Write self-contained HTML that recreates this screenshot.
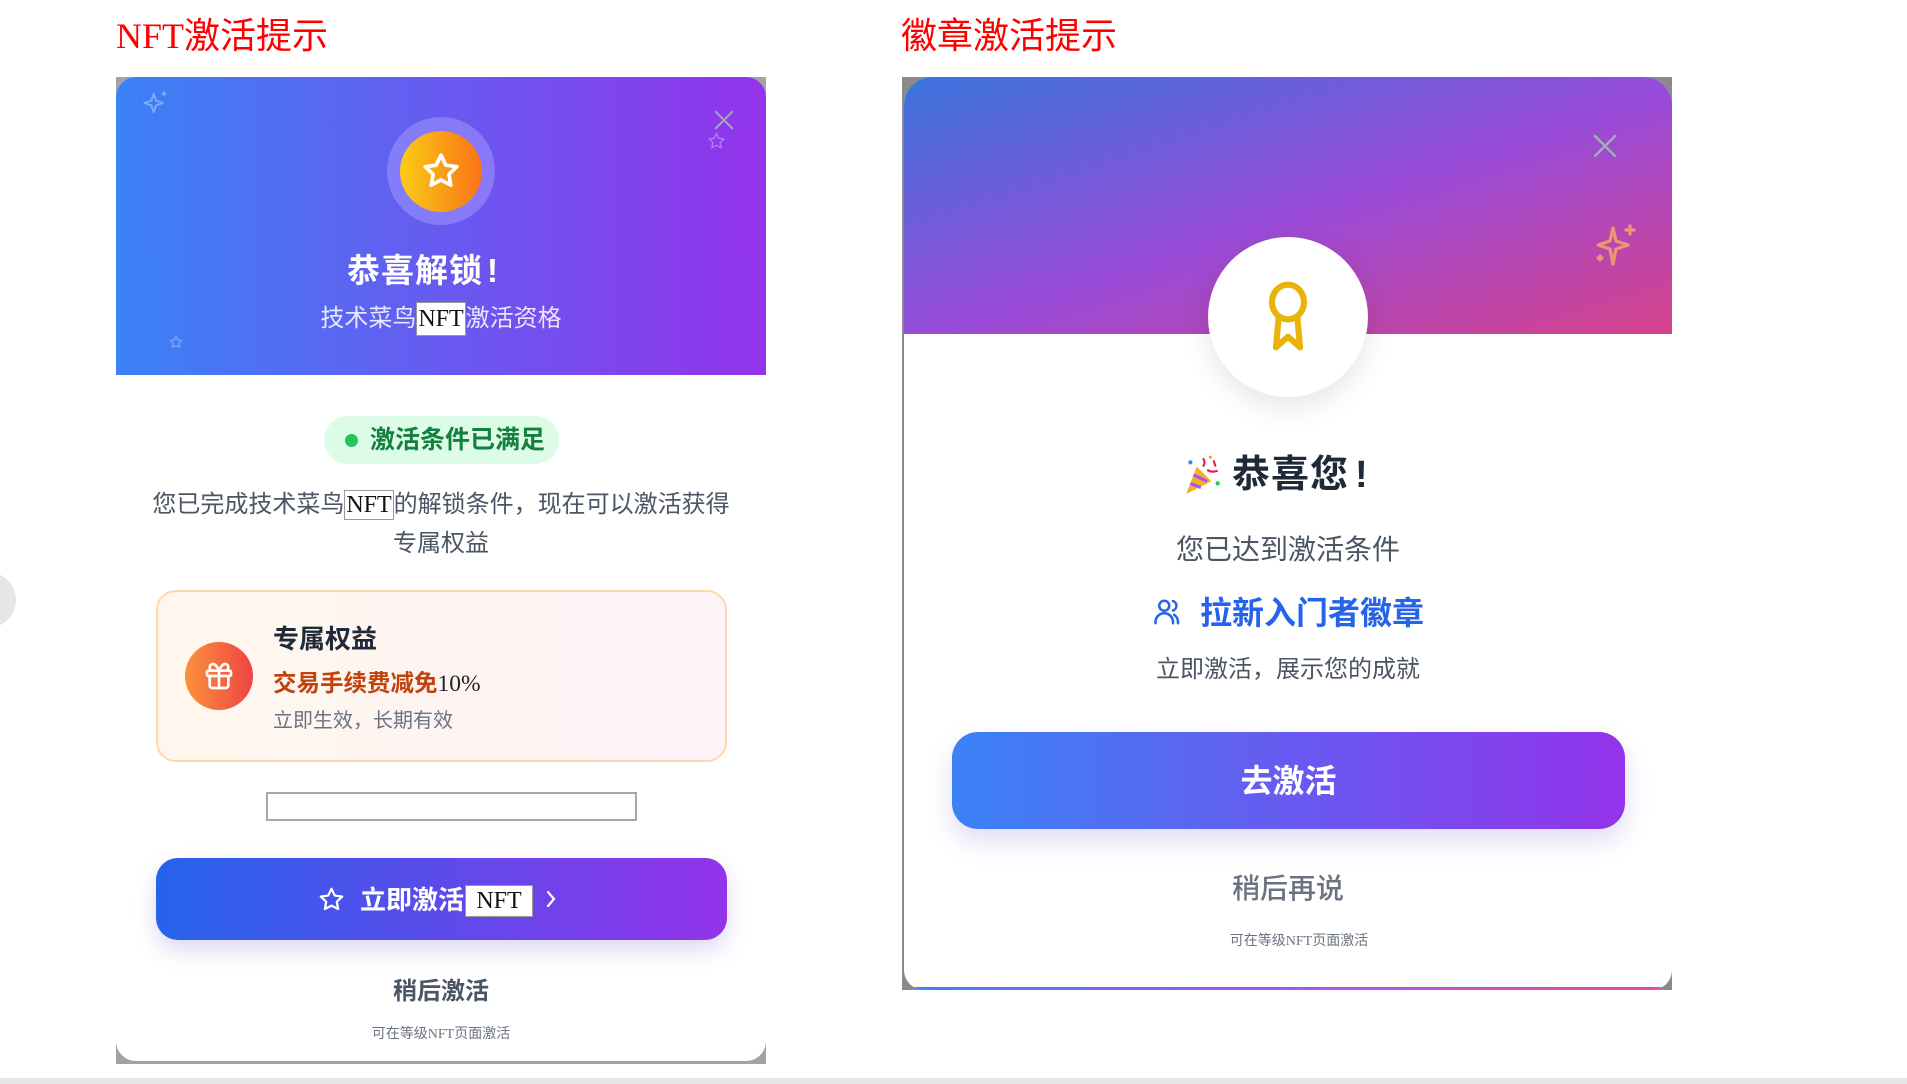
<!DOCTYPE html>
<html><head><meta charset="utf-8"><style>
*{margin:0;padding:0;box-sizing:border-box}
body{width:1907px;height:1084px;background:#fff;position:relative;overflow:hidden;font-family:"Liberation Sans","Noto Sans CJK SC",sans-serif}
.a{position:absolute}
.t{position:absolute;white-space:nowrap;text-align:center}
.nft{font-family:"Liberation Serif","Noto Serif CJK SC",serif;background:#fff;border:1px solid #999;color:#111;font-weight:normal;display:inline-block}
</style></head><body>

<div class="t" style="left:116px;top:14px;font-size:36px;line-height:44px;color:#f00;font-family:'Liberation Serif','Noto Sans CJK SC',sans-serif;text-align:left">NFT激活提示</div>
<div class="t" style="left:901px;top:14px;font-size:36px;line-height:44px;color:#f00;font-family:'Liberation Serif','Noto Sans CJK SC',sans-serif;text-align:left">徽章激活提示</div>

<div class="a" style="left:-40px;top:572px;width:56px;height:56px;border-radius:50%;background:#e6e6e6"></div>
<div class="a" style="left:0;top:1078px;width:1907px;height:6px;background:#e5e5e5"></div>

<!-- LEFT CARD -->
<div class="a" style="left:116px;top:77px;width:650px;height:987px;background:#a3a3a3"></div>
<div class="a" style="left:116px;top:77px;width:650px;height:984px;background:#fff;border-radius:20px;overflow:hidden">
  <div class="a" style="left:0;top:0;width:650px;height:298px;background:linear-gradient(90deg,#3b82f6,#9333ea)"></div>
</div>
<svg class="a" style="left:141px;top:89px" width="30" height="28" viewBox="0 0 24 24" fill="none" stroke="rgba(255,255,255,.35)" stroke-width="1.6" stroke-linejoin="round"><path d="M10 4 L12 10 L18 12 L12 14 L10 20 L8 14 L2 12 L8 10 Z"/><path d="M19 2v4M17 4h4"/></svg>
<svg class="a" style="left:712px;top:110px" width="24" height="22" viewBox="0 0 24 24" stroke="#a5a8c0" stroke-width="2.2" stroke-linecap="round"><path d="M3 2 L21 20 M21 2 L3 20"/></svg>
<svg class="a" style="left:707px;top:132px" width="19" height="18" viewBox="0 0 24 24" fill="none" stroke="rgba(255,255,255,.35)" stroke-width="1.8" stroke-linejoin="round"><path d="M12 2l3 6.5 7 .8-5.2 4.8 1.4 7L12 17.6 5.8 21.1l1.4-7L2 9.3l7-.8z"/></svg>
<svg class="a" style="left:169px;top:335px" width="14" height="14" viewBox="0 0 24 24" fill="none" stroke="rgba(255,255,255,.35)" stroke-width="2" stroke-linejoin="round"><path d="M12 2l3 6.5 7 .8-5.2 4.8 1.4 7L12 17.6 5.8 21.1l1.4-7L2 9.3l7-.8z"/></svg>
<div class="a" style="left:387px;top:117px;width:108px;height:108px;border-radius:50%;background:rgba(160,150,255,.55)"></div>
<div class="a" style="left:400px;top:131px;width:82px;height:81px;border-radius:50%;background:linear-gradient(90deg,#facc15,#f97316)"></div>
<svg class="a" style="left:421px;top:151px" width="40" height="40" viewBox="0 0 24 24" fill="none" stroke="#fff" stroke-width="2.2" stroke-linejoin="round"><path d="M12 2.5l2.9 6 6.6.9-4.8 4.6 1.2 6.5L12 17.4 6.1 20.5l1.2-6.5L2.5 9.4l6.6-.9z"/></svg>
<div class="t" style="left:98px;width:650px;top:252px;font-size:33px;line-height:38px;color:#fff;font-weight:bold;letter-spacing:1px">恭喜解锁<span style="margin-left:4px">!</span></div>
<div class="t" style="left:116px;width:650px;top:302px;font-size:24px;line-height:34px;color:rgba(255,255,255,.85)">技术菜鸟<span class="nft" style="font-size:24px;line-height:32px;padding:0 1px;color:#111">NFT</span>激活资格</div>

<div class="a" style="left:324px;top:416px;width:235px;height:48px;border-radius:24px;background:#dcfce7"></div>
<div class="a" style="left:345px;top:434px;width:13px;height:13px;border-radius:50%;background:#22c55e"></div>
<div class="t" style="left:370px;top:424px;font-size:25px;line-height:32px;color:#15803d;font-weight:bold;text-align:left">激活条件已满足</div>

<div class="t" style="left:116px;width:650px;top:485px;font-size:24px;line-height:39px;color:#4b5563">您已完成技术菜鸟<span class="nft" style="font-size:24px;line-height:28px;padding:0 1px">NFT</span>的解锁条件，现在可以激活获得<br>专属权益</div>

<div class="a" style="left:156px;top:590px;width:571px;height:172px;border-radius:20px;border:2px solid #fed7aa;background:linear-gradient(90deg,#fff7ed,#fdf2f8)"></div>
<div class="a" style="left:185px;top:642px;width:68px;height:68px;border-radius:50%;background:linear-gradient(90deg,#fb923c,#ef4444)"></div>
<svg class="a" style="left:203px;top:660px" width="32" height="32" viewBox="0 0 24 24" fill="none" stroke="#fff" stroke-width="2" stroke-linejoin="round"><rect x="3" y="8" width="18" height="4" rx="1"/><path d="M12 8v13M19 12v7a2 2 0 0 1-2 2H7a2 2 0 0 1-2-2v-7M7.5 8a2.5 2.5 0 0 1 0-5C10 3 12 8 12 8s2-5 4.5-5a2.5 2.5 0 0 1 0 5"/></svg>
<div class="t" style="left:273px;top:623px;font-size:26px;line-height:32px;color:#1f2937;font-weight:bold;text-align:left">专属权益</div>
<div class="t" style="left:273px;top:667px;font-size:23.5px;line-height:32px;color:#c2410c;font-weight:bold;text-align:left">交易手续费减免<span style="font-family:'Liberation Serif',serif;font-weight:normal;color:#222">10%</span></div>
<div class="t" style="left:273px;top:707px;font-size:20px;line-height:28px;color:#6b7280;text-align:left">立即生效，长期有效</div>

<div class="a" style="left:266px;top:792px;width:371px;height:29px;border:2px solid #a8a8a8;background:#fff"></div>

<div class="a" style="left:156px;top:858px;width:571px;height:82px;border-radius:22px;background:linear-gradient(90deg,#2563eb,#9333ea);box-shadow:0 10px 22px rgba(100,80,200,.22)"></div>
<svg class="a" style="left:318px;top:886px" width="27" height="27" viewBox="0 0 24 24" fill="none" stroke="#fff" stroke-width="2" stroke-linejoin="round"><path d="M12 2.5l2.9 6 6.6.9-4.8 4.6 1.2 6.5L12 17.4 6.1 20.5l1.2-6.5L2.5 9.4l6.6-.9z"/></svg>
<div class="t" style="left:360px;top:884px;font-size:26px;line-height:32px;color:#fff;font-weight:bold;text-align:left">立即激活</div>
<div class="a nft" style="left:465px;top:885px;width:68px;height:32px;font-size:24px;line-height:30px;text-align:center">NFT</div>
<svg class="a" style="left:544px;top:889px" width="14" height="20" viewBox="0 0 14 20" fill="none" stroke="#fff" stroke-width="2.2" stroke-linecap="round"><path d="M4 3l6 7-6 7"/></svg>

<div class="t" style="left:116px;width:650px;top:976px;font-size:24px;line-height:32px;color:#4b5563;font-weight:bold">稍后激活</div>
<div class="t" style="left:116px;width:650px;top:1024px;font-size:14px;line-height:18px;color:#6b7280">可在等级<span style="font-family:'Liberation Serif',serif">NFT</span>页面激活</div>

<!-- RIGHT CARD -->
<div class="a" style="left:902px;top:77px;width:770px;height:913px;background:#8a8a8a"></div>
<div class="a" style="left:904px;top:77px;width:768px;height:913px;background:#fff;border-radius:28px 28px 20px 20px;overflow:hidden">
  <div class="a" style="left:0;top:0;width:770px;height:257px;background:linear-gradient(162deg,#3a74dd 0%,#984bd9 52%,#d6428a 100%)"></div>
  <div class="a" style="left:0;bottom:0;width:770px;height:3px;background:linear-gradient(90deg,#3b82f6,#a855f7,#ec4899)"></div>
</div>
<div class="a" style="left:902px;top:334px;width:2px;height:640px;background:#8a8a8a"></div>
<svg class="a" style="left:1593px;top:134px" width="24" height="24" viewBox="0 0 24 24" stroke="#9fb0b8" stroke-width="2.4" stroke-linecap="round"><path d="M2 2 L22 22 M22 2 L2 22"/></svg>
<svg class="a" style="left:1592px;top:222px" width="48" height="48" viewBox="0 0 24 24" fill="none" stroke="#f0a070" stroke-width="1.6" stroke-linejoin="round" stroke-linecap="round" opacity=".9"><path d="M10.5 3 L12 9.5 L18 11.5 L12 13.5 L10.5 21 L9 13.5 L3 11.5 L9 9.5 Z"/><path d="M19 2v4M17 4h4M4 17v2M3 18h2"/></svg>
<div class="a" style="left:1208px;top:237px;width:160px;height:160px;border-radius:50%;background:#fff;box-shadow:0 10px 28px rgba(0,0,0,.10)"></div>
<svg class="a" style="left:1256px;top:280px" width="64" height="76" viewBox="0 0 24 28" fill="none" stroke="#eab308" stroke-width="2.3" stroke-linejoin="round" stroke-linecap="round"><ellipse cx="12" cy="8" rx="6" ry="6.5"/><path d="M8.5 13.5 L7.5 25 L12 21 L16.5 25 L15.5 13.5"/></svg>
<svg class="a" style="left:1182px;top:454px" width="42" height="42" viewBox="0 0 40 40"><path d="M4 38 L14 12 L28 26 Z" fill="#f2b01e"/><path d="M8 28 L18 32 M11 20 L24 26" stroke="#a855f7" stroke-width="3"/><path d="M20 4 q3 4 0 8 M30 6 l2 6 M34 16 q-6 2 -10 -1" stroke="#e11d48" stroke-width="2" fill="none"/><circle cx="8" cy="8" r="2" fill="#3b82f6"/><circle cx="34" cy="28" r="2" fill="#22c55e"/><circle cx="27" cy="3" r="1.5" fill="#f59e0b"/></svg>
<div class="t" style="left:1232px;top:452px;font-size:38px;line-height:46px;color:#1f2937;font-weight:bold;text-align:left;letter-spacing:1px">恭喜您<span style="margin-left:6px">!</span></div>
<div class="t" style="left:904px;width:768px;top:533px;font-size:28px;line-height:34px;color:#4b5563">您已达到激活条件</div>
<svg class="a" style="left:1152px;top:597px" width="32" height="30" viewBox="0 0 24 24" fill="none" stroke="#2563eb" stroke-width="2" stroke-linecap="round"><circle cx="9" cy="7" r="4"/><path d="M2 21v-1a7 7 0 0 1 14 0v1M16 3.2a4 4 0 0 1 0 7.6M20 21v-1a7 7 0 0 0-3-5.7"/></svg>
<div class="t" style="left:1200px;top:594px;font-size:32px;line-height:38px;color:#2563eb;font-weight:bold;text-align:left">拉新入门者徽章</div>
<div class="t" style="left:904px;width:768px;top:655px;font-size:24px;line-height:30px;color:#4b5563">立即激活，展示您的成就</div>
<div class="a" style="left:952px;top:732px;width:673px;height:97px;border-radius:26px;background:linear-gradient(90deg,#3b82f6,#9333ea);box-shadow:0 12px 26px rgba(100,80,200,.2)"></div>
<div class="t" style="left:952px;width:673px;top:761px;font-size:32px;line-height:40px;color:#fff;font-weight:bold">去激活</div>
<div class="t" style="left:904px;width:768px;top:872px;font-size:28px;line-height:34px;color:#6b7280;font-weight:500">稍后再说</div>
<div class="t" style="left:915px;width:768px;top:931px;font-size:14px;line-height:18px;color:#6b7280">可在等级<span style="font-family:'Liberation Serif',serif">NFT</span>页面激活</div>

</body></html>
